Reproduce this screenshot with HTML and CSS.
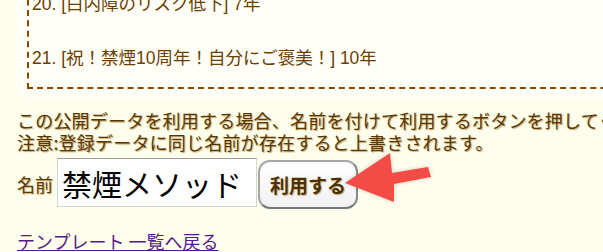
FILE: index.html
```html
<!DOCTYPE html>
<html lang="ja">
<head>
    <meta charset="UTF-8">
    <title>公開データ</title>
    <link rel="stylesheet" href="styles.css">
</head>
<body>

<div class="page">
    <div class="list-box">
        <div class="list-inner">
            <p class="list-item">20. [白内障のリスク低下] 7年</p>
            <p class="list-item">21. [祝！禁煙10周年！自分にご褒美！] 10年</p>
        </div>
    </div>

    <div class="notes">
        <p>この公開データを利用する場合、名前を付けて利用するボタンを押してください。</p>
        <p>注意:登録データに同じ名前が存在すると上書きされます。</p>
    </div>

    <form class="use-row" onsubmit="return false;">
        <label class="name-label" for="name">名前</label>
        <input class="name-input" type="text" id="name" value="禁煙メソッド">
        <button class="use-button" type="submit">利用する</button>
        <svg class="arrow" width="100" height="60" viewBox="0 0 100 60">
            <polygon points="5,33 50,3 52,23 88,17 91,27 54,34 54,52" fill="#f54b46"/>
        </svg>
    </form>

    <p class="back"><a href="#">テンプレート 一覧へ戻る</a></p>
</div>

</body>
</html>
```

FILE: styles.css
```css
body {
    margin: 0;
    background-color: #fefeec;
    color: #5c3a00;
    font-family: "Liberation Sans", "Noto Sans CJK JP", sans-serif;
    font-size: 18px;
    overflow: hidden;
}
p {
    margin: 0;
}
.page {
    padding-left: 17px;
}
.list-box {
    width: 680px;
    margin-top: -21px;
    padding: 10px;
    background-color: #fffff8;
    border-radius: 15px;
}
.list-inner {
    border: 2px dashed #8b4a00;
    padding: 0 4px 15px 3px;
}
.list-item {
    font-size: 17.5px;
    line-height: 27px;
    color: #6a4000;
    white-space: nowrap;
}
.list-item + .list-item {
    margin-top: 27px;
}
.notes {
    margin-top: 10px;
    font-family: "Noto Sans CJK JP", sans-serif;
    line-height: 22px;
    letter-spacing: 0.2px;
    color: #5a3700;
    text-shadow: 1px 1px 1px rgba(150, 100, 20, 0.55);
    white-space: nowrap;
}
.use-row {
    position: relative;
    display: flex;
    align-items: flex-start;
    margin-top: 5px;
}
.name-label {
    margin-top: 2px;
    margin-right: 4px;
    line-height: 49px;
    font-family: "Noto Sans CJK JP", sans-serif;
    text-shadow: 1px 1px 1px rgba(150, 100, 20, 0.5);
}
.name-input {
    box-sizing: border-box;
    width: 200px;
    height: 49px;
    margin: 0;
    padding: 0 4px;
    border: 1px solid #d4d4d4;
    border-top-color: #9a9a9a;
    background: #fff;
    color: #000;
    font-family: "Noto Sans CJK JP", sans-serif;
    font-size: 30px;
}
.use-button {
    box-sizing: border-box;
    width: 100px;
    height: 49px;
    margin: 2px 0 0 1px;
    padding: 0;
    border: 2px solid #a6a6a6;
    border-right-color: #888;
    border-bottom-color: #777;
    border-radius: 12px;
    background: linear-gradient(#ffffff, #f1f1f1);
    color: #4d3200;
    font-family: "Noto Sans CJK JP", sans-serif;
    font-size: 19px;
    font-weight: bold;
    text-shadow: 1px 1px 1px rgba(150, 100, 20, 0.45);
}
.arrow {
    position: absolute;
    left: 323px;
    top: -8px;
    filter: drop-shadow(0 0 2px rgba(0, 0, 0, 0.2));
}
.back {
    margin-top: 22px;
    line-height: 20px;
    font-family: "Noto Sans CJK JP", sans-serif;
}
.back a {
    color: #551a8b;
    text-underline-offset: 1px;
}
```
